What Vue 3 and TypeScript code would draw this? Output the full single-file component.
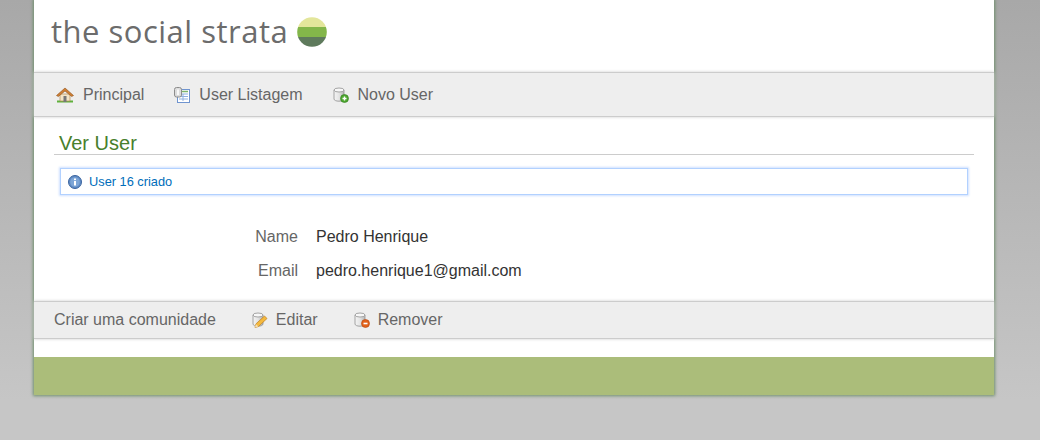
<script setup lang="ts">
const fields = [
  { label: 'Name', value: 'Pedro Henrique' },
  { label: 'Email', value: 'pedro.henrique1@gmail.com' }
]
</script>

<template>
  <div class="page">
    <svg class="defs" width="0" height="0">
      <defs>
        <linearGradient id="db">
          <stop offset="0" stop-color="#f4f4f4" />
          <stop offset="0.5" stop-color="#e4e4e4" />
          <stop offset="1" stop-color="#b4b4b4" />
        </linearGradient>
        <clipPath id="strata"><circle cx="15" cy="15" r="14.800" /></clipPath>
      </defs>
    </svg>
    <div class="logo">
      <span class="logo-text">the social strata</span>
      <svg class="logo-mark" width="30" height="30" viewBox="0 0 30 30">
        <g clip-path="url(#strata)">
          <rect width="30" height="10" fill="#e3e69b" />
          <rect y="10" width="30" height="10" fill="#83b64a" />
          <rect y="20" width="30" height="10" fill="#5e7a5c" />
        </g>
      </svg>
    </div>

    <div class="nav top-nav">
      <a class="nav-item">
        <svg width="18" height="16" viewBox="0 0 18 16">
          <path d="M1 13.500h16V15.500H1z" fill="#5fb03c" />
          <path d="M4 7h10v7H4z" fill="#f3e3c6" stroke="#b58c55" stroke-width=".7" />
          <path d="M7.500 9h3v6h-3z" fill="#777" />
          <path d="M.5 8.500 9 1l8.500 7.500-1.800 1L9 4 2.300 9.500z" fill="#cf7f33" stroke="#8f521c" stroke-width=".6" />
        </svg>
        Principal
      </a>
      <a class="nav-item">
        <svg width="16" height="16" viewBox="0 0 16 16">
          <rect x="3.500" y="2.500" width="12" height="13" fill="#fff" stroke="#6f94cf" />
          <path d="M5 7h9M5 9.500h9M5 12h9M9 7v7" stroke="#8fb0e0" />
          <path d="M8 4.500h6" stroke="#7cb36a" stroke-width="1.500" />
          <rect x=".5" y=".5" width="7" height="9.500" rx="2" fill="#dcdcdc" stroke="#8c8c8c" />
          <rect x="3" y="2.500" width="2" height="5.500" fill="#f8f8f8" />
        </svg>
        User Listagem
      </a>
      <a class="nav-item">
        <svg width="16" height="16" viewBox="0 0 16 16">
          <path d="M1 3v9c0 1.300 2.200 2.200 5 2.200s5-.9 5-2.200V3z" fill="url(#db)" stroke="#8f8f8f" stroke-width=".8" />
          <ellipse cx="6" cy="3" rx="5" ry="2" fill="#f7f7f7" stroke="#8f8f8f" stroke-width=".8" />
          <circle cx="11.500" cy="11.500" r="4" fill="#4ea82f" stroke="#2f7a1c" stroke-width=".6" />
          <path d="M9.500 11.500h4M11.500 9.500v4" stroke="#fff" stroke-width="1.400" />
        </svg>
        Novo User
      </a>
    </div>

    <div class="content">
      <h1>Ver User</h1>
      <div class="message">
        <svg width="14" height="14" viewBox="0 0 14 14">
          <circle cx="7" cy="7" r="6.500" fill="#5f8bc4" stroke="#3c659f" />
          <circle cx="7" cy="7" r="4.800" fill="#7da5d6" />
          <rect x="6" y="6" width="2" height="4.500" fill="#fff" />
          <rect x="6" y="3.500" width="2" height="1.600" fill="#fff" />
        </svg>
        User 16 criado
      </div>
      <dl class="fields">
        <div v-for="field in fields" :key="field.label" class="field">
          <dt>{{ field.label }}</dt>
          <dd>{{ field.value }}</dd>
        </div>
      </dl>
    </div>

    <div class="nav bottom-nav">
      <a class="nav-item">Criar uma comunidade</a>
      <a class="nav-item">
        <svg width="16" height="16" viewBox="0 0 16 16">
          <path d="M1 3v9c0 1.300 2.200 2.200 5 2.200s5-.9 5-2.200V3z" fill="url(#db)" stroke="#8f8f8f" stroke-width=".8" />
          <ellipse cx="6" cy="3" rx="5" ry="2" fill="#f7f7f7" stroke="#8f8f8f" stroke-width=".8" />
          <path d="M3 15.500l.8-3.500L12.500 4l2.500 2.500-8.500 8z" fill="#f4b93e" stroke="#bd7d1c" stroke-width=".7" />
          <path d="M3 15.500l.8-3.500 2.700 2.500z" fill="#f5dfb0" />
        </svg>
        Editar
      </a>
      <a class="nav-item">
        <svg width="16" height="16" viewBox="0 0 16 16">
          <path d="M1 3v9c0 1.300 2.200 2.200 5 2.200s5-.9 5-2.200V3z" fill="url(#db)" stroke="#8f8f8f" stroke-width=".8" />
          <ellipse cx="6" cy="3" rx="5" ry="2" fill="#f7f7f7" stroke="#8f8f8f" stroke-width=".8" />
          <circle cx="11.500" cy="11.500" r="4" fill="#e2611a" stroke="#b5440c" stroke-width=".6" />
          <path d="M9.500 11.500h4" stroke="#fff" stroke-width="1.600" />
        </svg>
        Remover
      </a>
    </div>

    <div class="spacer"></div>
    <div class="footer"></div>
  </div>
</template>

<style>
html,
body {
  height: 100%;
  margin: 0;
  background: linear-gradient(#a8a8a8, #c6c6c6 400px);
  overflow: hidden;
}
</style>

<style scoped>
.page {
  width: 960px;
  margin-left: 34px;
  background: #fff;
  box-shadow: 0 0 3px 1px #6f8f6c;
  font-family: 'Liberation Sans', Arial, sans-serif;
  font-size: 16px;
  color: #666;
}
.defs {
  display: block;
}
.logo {
  height: 72px;
  box-sizing: border-box;
  padding: 14px 0 0 17px;
  display: flex;
  align-items: flex-start;
  gap: 9px;
}
.logo-text {
  font-family: 'Open Sans', sans-serif;
  font-size: 31px;
  line-height: 34px;
  letter-spacing: 0.5px;
  color: #6c6c6c;
}
.logo-mark {
  margin-top: 3px;
}
.nav {
  display: flex;
  align-items: center;
  background: #eee;
  border-top: 1px solid #ccc;
  border-bottom: 1px solid #ccc;
  box-shadow: 0 0 3px #ccc;
}
.top-nav {
  height: 43px;
  padding-left: 22px;
  gap: 30px;
}
.bottom-nav {
  height: 36px;
  padding-left: 20px;
  gap: 36px;
}
.nav-item {
  display: flex;
  align-items: center;
  gap: 9px;
  color: #666;
  line-height: 18px;
}
.bottom-nav .nav-item {
  gap: 8px;
}
.content {
  height: 184px;
  box-sizing: border-box;
  padding: 14px 20px 0;
}
h1 {
  margin: 0;
  padding: 0 5px;
  height: 23px;
  font-size: 20px;
  font-weight: normal;
  line-height: 24px;
  color: #48802c;
  border-bottom: 1px solid #ccc;
}
.message {
  display: flex;
  align-items: center;
  gap: 7px;
  height: 25px;
  margin: 13px 6px 0;
  padding-left: 7px;
  border: 1px solid #b2d1ff;
  box-shadow: 0 0 2px 1px #cfe1ff;
  font-size: 12.8px;
  color: #006dba;
}
.fields {
  margin: 25px 0 0;
}
.field {
  display: flex;
  height: 34px;
  line-height: 34px;
}
dt {
  width: 244px;
  text-align: right;
  color: #666;
}
dd {
  margin: 0 0 0 18px;
  color: #333;
}
.spacer {
  height: 18px;
}
.footer {
  height: 38px;
  background: #abbd7a;
}
</style>
